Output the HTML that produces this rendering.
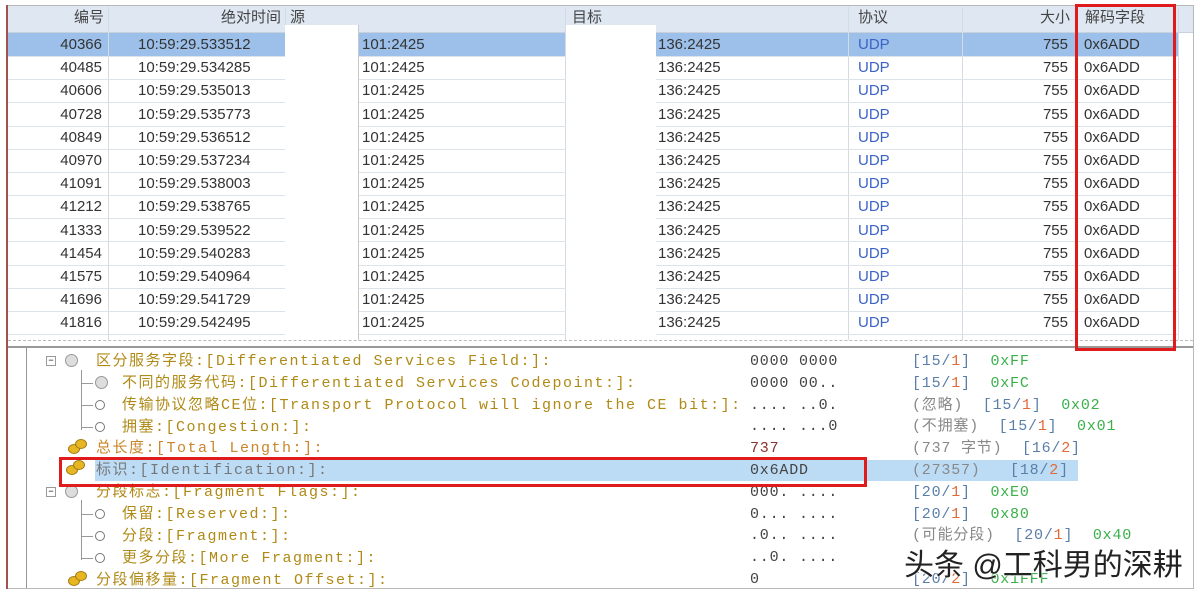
<!DOCTYPE html>
<html><head><meta charset="utf-8"><style>
*{margin:0;padding:0;box-sizing:border-box}
body{width:1200px;height:594px;background:#fff;position:relative;overflow:hidden;font-family:"Liberation Sans","Noto Sans CJK SC",sans-serif}
.a{position:absolute;white-space:nowrap}
.t{font-size:15px;color:#333;line-height:23px}
.r{text-align:right}
.hl{position:absolute;left:8px;width:1185px;height:1px;background:#dde3ea}
.vl{position:absolute;width:1px;background:#d4dbe3;top:7px;height:340px}
.m{font-family:"Liberation Mono","Noto Sans CJK SC",monospace;font-size:15px;line-height:20px;letter-spacing:1.5px}
.n{letter-spacing:0.8px}
.g{color:#b08a16}.v{color:#444}.b{color:#5a7fa8}.gr{color:#3bb04a}.o{color:#e06a3a}.gy{color:#888}
.ic{position:absolute;width:10px;height:10px;border:1px solid #777;border-radius:50%;background:#fff}
.icg{position:absolute;width:13px;height:13px;border-radius:50%;background:#ddd;border:1px solid #999}
.coin{position:absolute;width:12px;height:10px;border-radius:50%;background:#e7b623;border:1px solid #a37b10}
.tl{position:absolute;background:#999}
</style></head><body>
<div class="a" style="left:6px;top:5px;width:1188px;height:584px;border:1px solid #b8b8b8"></div>
<div class="a" style="left:6px;top:5px;width:2px;height:584px;background:#a0524d"></div>
<div class="a" style="left:8px;top:6px;width:1185px;height:27px;background:#dfe8f2;border-bottom:1px solid #c8d2dc"></div>
<div class="a" style="left:8px;top:33px;width:1170px;height:23px;background:#9cc0ea"></div>
<div class="vl" style="left:108px"></div><div class="vl" style="left:285px"></div><div class="vl" style="left:565px"></div><div class="vl" style="left:848px"></div><div class="vl" style="left:962px"></div><div class="vl" style="left:1075px"></div><div class="vl" style="left:1178px"></div>
<div class="hl" style="top:56px"></div><div class="hl" style="top:79px"></div><div class="hl" style="top:102px"></div><div class="hl" style="top:126px"></div><div class="hl" style="top:149px"></div><div class="hl" style="top:172px"></div><div class="hl" style="top:195px"></div><div class="hl" style="top:218px"></div><div class="hl" style="top:241px"></div><div class="hl" style="top:265px"></div><div class="hl" style="top:288px"></div><div class="hl" style="top:311px"></div><div class="hl" style="top:334px"></div>
<div class="a" style="left:285px;top:25px;width:74px;height:322px;background:#fff;border-right:1px solid #c8c8c8"></div>
<div class="a" style="left:566px;top:25px;width:90px;height:322px;background:#fff"></div>
<div class="a" style="left:1179px;top:33px;width:14px;height:314px;background:#fff"></div>
<div class="a t r" style="left:8px;width:96px;top:6px;color:#444">编号</div>
<div class="a t r" style="left:108px;width:173px;top:6px;color:#444">绝对时间</div>
<div class="a t" style="left:290px;top:6px;color:#444">源</div>
<div class="a t" style="left:572px;top:6px;color:#444">目标</div>
<div class="a t" style="left:858px;top:6px;color:#444">协议</div>
<div class="a t r" style="left:962px;width:108px;top:6px;color:#444">大小</div>
<div class="a t" style="left:1085px;top:6px;color:#444">解码字段</div>
<div class="a t r" style="left:8px;width:94px;top:33px;line-height:23.2px">40366<br>40485<br>40606<br>40728<br>40849<br>40970<br>41091<br>41212<br>41333<br>41454<br>41575<br>41696<br>41816</div>
<div class="a t" style="left:138px;top:33px;line-height:23.2px">10:59:29.533512<br>10:59:29.534285<br>10:59:29.535013<br>10:59:29.535773<br>10:59:29.536512<br>10:59:29.537234<br>10:59:29.538003<br>10:59:29.538765<br>10:59:29.539522<br>10:59:29.540283<br>10:59:29.540964<br>10:59:29.541729<br>10:59:29.542495</div>
<div class="a t" style="left:362px;top:33px;line-height:23.2px">101:2425<br>101:2425<br>101:2425<br>101:2425<br>101:2425<br>101:2425<br>101:2425<br>101:2425<br>101:2425<br>101:2425<br>101:2425<br>101:2425<br>101:2425</div>
<div class="a t" style="left:658px;top:33px;line-height:23.2px">136:2425<br>136:2425<br>136:2425<br>136:2425<br>136:2425<br>136:2425<br>136:2425<br>136:2425<br>136:2425<br>136:2425<br>136:2425<br>136:2425<br>136:2425</div>
<div class="a t" style="left:858px;top:33px;line-height:23.2px;color:#3b63c8">UDP<br>UDP<br>UDP<br>UDP<br>UDP<br>UDP<br>UDP<br>UDP<br>UDP<br>UDP<br>UDP<br>UDP<br>UDP</div>
<div class="a t r" style="left:962px;width:106px;top:33px;line-height:23.2px">755<br>755<br>755<br>755<br>755<br>755<br>755<br>755<br>755<br>755<br>755<br>755<br>755</div>
<div class="a t" style="left:1084px;top:33px;line-height:23.2px">0x6ADD<br>0x6ADD<br>0x6ADD<br>0x6ADD<br>0x6ADD<br>0x6ADD<br>0x6ADD<br>0x6ADD<br>0x6ADD<br>0x6ADD<br>0x6ADD<br>0x6ADD<br>0x6ADD</div>
<div class="a" style="left:8px;top:340px;width:1185px;height:8px;background:#fff;border-top:1px dashed #bbb"></div>
<div class="a" style="left:8px;top:346px;width:1185px;height:2px;background:#999"></div>
<div class="a" style="left:1075px;top:4px;width:101px;height:347px;border:3px solid #e01b1b"></div>
<div class="tl" style="left:26px;top:348px;width:1px;height:240px"></div>
<div class="tl" style="left:81px;top:370px;width:1px;height:60px"></div>
<div class="tl" style="left:81px;top:500px;width:1px;height:60px"></div>
<div class="tl" style="left:81px;top:383px;width:12px;height:1px"></div>
<div class="tl" style="left:81px;top:405px;width:12px;height:1px"></div>
<div class="tl" style="left:81px;top:427px;width:12px;height:1px"></div>
<div class="tl" style="left:81px;top:514px;width:12px;height:1px"></div>
<div class="tl" style="left:81px;top:536px;width:12px;height:1px"></div>
<div class="tl" style="left:81px;top:558px;width:12px;height:1px"></div>
<div class="a" style="left:46px;top:356px;width:10px;height:10px;border:1px solid #999;background:#fff;font-size:9px;line-height:7px;text-align:center">−</div>
<div class="a" style="left:46px;top:487px;width:10px;height:10px;border:1px solid #999;background:#fff;font-size:9px;line-height:7px;text-align:center">−</div>
<div class="icg" style="left:65px;top:354px"></div><div class="icg" style="left:65px;top:485px"></div>
<div class="icg" style="left:95px;top:376px"></div>
<div class="ic" style="left:95px;top:400px"></div><div class="ic" style="left:95px;top:422px"></div>
<div class="ic" style="left:95px;top:509px"></div><div class="ic" style="left:95px;top:531px"></div><div class="ic" style="left:95px;top:553px"></div>
<div class="coin" style="left:68px;top:444px"></div><div class="coin" style="left:75px;top:439px"></div>
<div class="coin" style="left:66px;top:465px"></div><div class="coin" style="left:73px;top:460px"></div>
<div class="coin" style="left:68px;top:576px"></div><div class="coin" style="left:75px;top:571px"></div>
<div class="a" style="left:95px;top:460px;width:983px;height:21px;background:#bcdcf6"></div>
<div class="a m g" style="left:96px;top:351px;line-height:21.8px">区分服务字段:[Differentiated Services Field:]:</div>
<div class="a m g" style="left:122px;top:373px;line-height:21.8px">不同的服务代码:[Differentiated Services Codepoint:]:<br>传输协议忽略CE位:[Transport Protocol will ignore the CE bit:]:<br>拥塞:[Congestion:]:</div>
<div class="a m g" style="left:96px;top:438px;line-height:21.8px;color:#c9862a">总长度:[Total Length:]:</div>
<div class="a m" style="left:96px;top:460px;line-height:21.8px;color:#777">标识:[Identification:]:</div>
<div class="a m g" style="left:96px;top:482px;line-height:21.8px">分段标志:[Fragment Flags:]:</div>
<div class="a m g" style="left:122px;top:504px;line-height:21.8px">保留:[Reserved:]:<br>分段:[Fragment:]:<br>更多分段:[More Fragment:]:</div>
<div class="a m g" style="left:96px;top:570px;line-height:21.8px">分段偏移量:[Fragment Offset:]:</div>
<div class="a m n v" style="left:750px;top:351px;line-height:21.8px">0000 0000<br>0000 00..<br>.... ..0.<br>.... ...0<br><span style="color:#8a3030">737</span><br>0x6ADD<br>000. ....<br>0... ....<br>.0.. ....<br>..0. ....<br>0</div>
<div class="a m n b" style="left:912px;top:351px;line-height:21.8px">[15/<span class="o">1</span>]&nbsp;&nbsp;<span class="gr">0xFF</span><br>[15/<span class="o">1</span>]&nbsp;&nbsp;<span class="gr">0xFC</span><br><span class="gy">(忽略)</span>&nbsp;&nbsp;[15/<span class="o">1</span>]&nbsp;&nbsp;<span class="gr">0x02</span><br><span class="gy">(不拥塞)</span>&nbsp;&nbsp;[15/<span class="o">1</span>]&nbsp;&nbsp;<span class="gr">0x01</span><br><span class="gy">(737 字节)</span>&nbsp;&nbsp;[16/<span class="o">2</span>]<br><span class="gy">(27357)</span>&nbsp;&nbsp;&nbsp;[18/<span class="o">2</span>]<br>[20/<span class="o">1</span>]&nbsp;&nbsp;<span class="gr">0xE0</span><br>[20/<span class="o">1</span>]&nbsp;&nbsp;<span class="gr">0x80</span><br><span class="gy">(可能分段)</span>&nbsp;&nbsp;[20/<span class="o">1</span>]&nbsp;&nbsp;<span class="gr">0x40</span><br><br>[20/<span class="o">2</span>]&nbsp;&nbsp;<span class="gr">0x1FFF</span></div>
<div class="a" style="left:59px;top:457px;width:808px;height:30px;border:3px solid #e01b1b"></div>
<div class="a" style="left:904px;top:540px;font-size:30px;color:#222;font-family:'Liberation Sans','Noto Sans CJK SC',sans-serif;text-shadow:0 0 2px #fff,0 0 2px #fff">头条 @工科男的深耕</div>
</body></html>
